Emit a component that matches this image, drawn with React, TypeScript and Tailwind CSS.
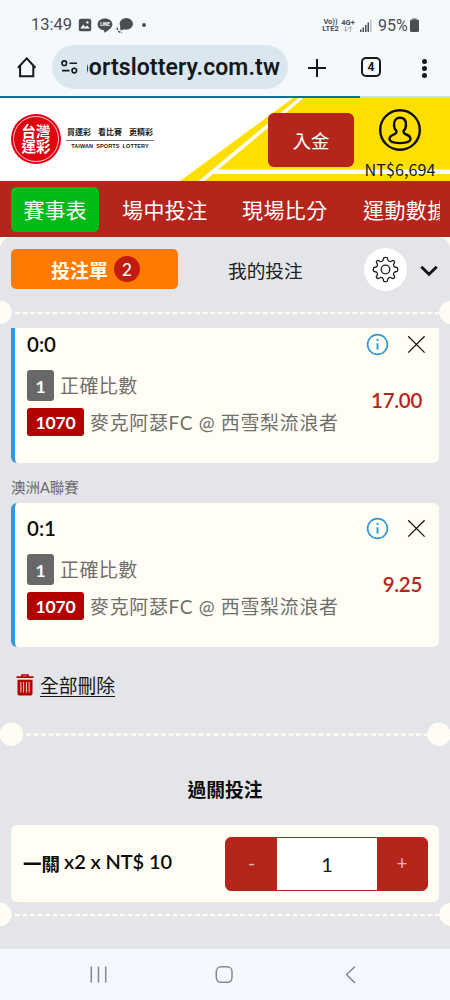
import type { ReactNode } from 'react'

type Bet = {
  score: string
  odds: string
}

const bets: Bet[] = [
  { score: '0:0', odds: '17.00' },
  { score: '0:1', odds: '9.25' },
]

function StatusBar() {
  return (
    <div className="h-[45px] pt-[5px] pl-[31px] pr-[31px] flex items-center justify-between text-[#4a4d52] font-['Roboto',sans-serif]">
      <div className="flex items-center">
        <span className="w-[47px] text-[16.5px] leading-5 whitespace-nowrap">13:49</span>
        <svg width="14" height="14" viewBox="0 0 14 14" className="block">
          <rect x="0.8" y="0.8" width="12.4" height="12.4" rx="2" fill="#4a4d52" />
          <path d="M2.3 10.6 L5.2 6.6 L7.4 9 L9.2 7.4 L11.8 10.6 Z" fill="#f5f8fd" />
          <circle cx="9.4" cy="4.4" r="1.2" fill="#f5f8fd" />
        </svg>
        <svg width="16" height="15" viewBox="0 0 16 15" className="block ml-[5px]">
          <path d="M8 0.4C3.9 0.4 0.6 3 0.6 6.4c0 3 2.6 5.3 6.1 5.8.8.2.6.9.5 2 0 .4.3.4.6.2 2.4-1.4 7.6-4.6 7.6-8C15.4 3 12.1.4 8 .4Z" fill="#4a4d52" />
          <text x="8" y="8.3" textAnchor="middle" fontSize="4.6" fontWeight="900" fill="#f5f8fd">LINE</text>
        </svg>
        <svg width="18" height="17" viewBox="0 0 18 17" className="block ml-[3px]">
          <ellipse cx="10.3" cy="6.8" rx="6.7" ry="5.9" fill="#4a4d52" />
          <path d="M4 9 L4.500 13.500 L9 12 Z" fill="#4a4d52" />
          <path d="M1.2 10.5c0 3 2 5 5 5" fill="none" stroke="#4a4d52" strokeWidth="1.5" strokeDasharray="2.4 1.2" />
        </svg>
        <span className="ml-[8px] size-[4px] rounded-full bg-[#4a4d52]" />
      </div>
      <div className="flex items-center">
        <div className="w-[19px] text-[7.5px] leading-[7px] font-bold text-center whitespace-nowrap">
          <p>Vo))</p>
          <p>LTE2</p>
        </div>
        <div className="w-[14px] ml-[1px] flex flex-col items-center text-[7.5px] leading-[7px] font-bold">
          <p>4G+</p>
          <svg width="10" height="6" viewBox="0 0 10 6" fill="none" stroke="#9b9ea3" strokeWidth="0.9">
            <path d="M2.8 0v5.2M1 3.5l1.8 1.8 1.8-1.8M7.2 6V.7M5.4 2.5 7.2.7 9 2.500" />
          </svg>
        </div>
        <svg width="12" height="12" viewBox="0 0 12 12" className="block ml-[5px] mt-[2px]" fill="#4a4d52">
          <rect x="0" y="9.5" width="1.5" height="2.5" />
          <rect x="2.5" y="7.5" width="1.5" height="4.5" />
          <rect x="5" y="5" width="1.5" height="7" />
          <rect x="7.5" y="2.5" width="1.5" height="9.5" />
          <rect x="10" y="0" width="1.5" height="12" fill="#b9bcc1" />
        </svg>
        <span className="ml-[6px] w-[31px] pt-[1px] text-[16px] leading-5 whitespace-nowrap">95%</span>
        <svg width="9" height="14" viewBox="0 0 9 14" className="block ml-[1px]">
          <rect x="2.5" y="0" width="4" height="3" fill="#9b9ea3" />
          <rect x="0" y="1.5" width="9" height="12.5" rx="1.5" fill="#4a4d52" />
        </svg>
      </div>
    </div>
  )
}

function BrowserBar() {
  return (
    <div className="h-[51px] flex items-start text-[#15191d]">
      <svg width="20" height="21" viewBox="0 0 20 21" className="block ml-[17px] mt-[12px]" fill="none" stroke="#15191d" strokeWidth="2">
        <path d="M1 10.800 9.700 1.400l8.700 9.400M3.100 8.800v10.400h13.200V8.800" />
      </svg>
      <div className="ml-[15px] w-[236px] h-[44px] rounded-full bg-[#dae7ef] flex items-center pl-[9px] overflow-hidden">
        <svg width="17" height="14" viewBox="0 0 17 14" className="block" fill="none" stroke="#15191d" strokeWidth="1.6">
          <circle cx="3.3" cy="3.2" r="2.300" />
          <path d="M8.500 3.200H16M1 10.600h7.500" />
          <circle cx="13.300" cy="10.600" r="2.300" />
        </svg>
        <div className="ml-[9px] mt-[2px] w-[193px] overflow-hidden flex justify-end">
          <span className="text-[23px] leading-7 font-semibold font-['Roboto',sans-serif] tracking-[0.100px] whitespace-nowrap">
            portslottery.com.tw
          </span>
        </div>
      </div>
      <svg width="18" height="18" viewBox="0 0 18 18" className="block ml-[20px] mt-[14px]" stroke="#15191d" strokeWidth="2">
        <path d="M9 0v18M0 9h18" />
      </svg>
      <div className="ml-[35px] mt-[12px] size-[20px] rounded-[5px] border-2 border-[#15191d] flex items-center justify-center text-[12px] leading-none font-bold font-['Roboto',sans-serif]">
        4
      </div>
      <div className="ml-[41px] mt-[14px] flex flex-col gap-[2.5px]">
        <span className="size-[4.5px] rounded-full bg-[#15191d]" />
        <span className="size-[4.5px] rounded-full bg-[#15191d]" />
        <span className="size-[4.5px] rounded-full bg-[#15191d]" />
      </div>
    </div>
  )
}

function Logo() {
  return (
    <div className="flex items-start">
      <div className="size-[50px] rounded-full bg-[#e0000f] p-[2px]">
        <div className="size-full rounded-full border border-white/80 flex flex-col items-center justify-center pt-[1px] text-white text-[14.5px] leading-[14.5px] font-bold">
          <span>台灣</span>
          <span>運彩</span>
        </div>
      </div>
      <div className="ml-[5px] mt-[13px] w-[88px] text-[#222] text-center">
        <div className="flex justify-between text-[8px] leading-[11px] font-bold px-[1px]">
          <span>買運彩</span>
          <span>看比賽</span>
          <span>更精彩</span>
        </div>
        <div className="mt-[2px] border-t border-[#777] pt-[2px] text-[5.5px] leading-[7px] font-bold tracking-[0.1px] whitespace-nowrap font-['Liberation_Sans',sans-serif] [word-spacing:1.5px]">
          TAIWAN SPORTS LOTTERY
        </div>
      </div>
    </div>
  )
}

function SiteHeader() {
  return (
    <div className="relative h-[83px] bg-white overflow-hidden">
      {/* Franjas amarillas del fondo */}
      <svg width="450" height="83" viewBox="0 0 450 83" className="absolute inset-0">
        <path d="M293 0H450V83H180Z" fill="#ffdf00" />
        <path d="M298.500 0h5L204.500 83h-6Z" fill="#fff" />
        <path d="M207 76 214 71.500H450V76Z" fill="#fff" />
      </svg>
      <div className="relative flex items-start pl-[11px]">
        <div className="mt-[16px]">
          <Logo />
        </div>
        <button className="ml-[114px] mt-[15px] w-[86px] h-[54px] pt-[3px] shrink-0 rounded-[6px] bg-[#b6251c] text-white text-[18.5px] leading-none">
          入金
        </button>
        <div className="ml-[2px] mt-[10px] w-[88px] shrink-0 flex flex-col items-center">
          <svg width="44" height="44" viewBox="0 0 44 44" className="block" fill="none" stroke="#0c0c0c" strokeWidth="2.4">
            <circle cx="22" cy="22" r="19.8" />
            <path d="M22 9.8c-4 0-6 2.9-6 6.7 0 2.8 1 5.2 2.5 6.5.3 2-.6 2.7-2.7 3.500-3 1.100-4.300 2.600-4.300 4.600 0 2.400 4.500 4 10.500 4s10.500-1.600 10.500-4c0-2-1.300-3.500-4.300-4.600-2.100-.8-3-1.500-2.700-3.500 1.500-1.300 2.500-3.700 2.500-6.500 0-3.800-2-6.700-6-6.700Z" />
          </svg>
          <span className="mt-[7px] text-[16.2px] leading-[20px] text-[#1a1a1a] whitespace-nowrap font-['Noto_Sans_CJK_TC',sans-serif]">NT$6,694</span>
        </div>
      </div>
    </div>
  )
}

function Divider({ inset = false }: { inset?: boolean }) {
  return (
    <svg width="450" height="24" viewBox="0 0 450 24" className="block shrink-0">
      <path d={inset ? 'M26 12.7H428' : 'M15 13.200H440'} stroke="#fffdf3" strokeWidth="2.2" strokeDasharray="5 2.5" />
      <circle cx={inset ? 11.5 : 0} cy="12.3" r="11.700" fill="#fffdf3" />
      <circle cx={inset ? 439 : 451} cy="12.3" r="11.700" fill="#fffdf3" />
    </svg>
  )
}

function Tag({ children, className }: { children: ReactNode; className: string }) {
  return (
    <span className={`rounded-[3px] pt-[2px] text-white font-bold text-[17.500px] tracking-[-0.200px] leading-none flex items-center justify-center shrink-0 ${className}`}>
      {children}
    </span>
  )
}

function BetCard({ bet }: { bet: Bet }) {
  return (
    <div className="h-[144px] w-[428px] shrink-0 flex justify-between rounded-[6px] border-l-4 border-[#3498db] bg-[#fffdf4] pl-[12px]">
      <div className="pt-[13px] whitespace-nowrap">
        <p className="text-[20.5px] leading-[24px] font-semibold text-[#0c0c0c]">{bet.score}</p>
        <div className="mt-[14px] flex items-center text-[#6f6f6c]">
          <Tag className="w-[27px] h-[31px] bg-[#686868]">1</Tag>
          <span className="ml-[6px] text-[19px] leading-[31px] tracking-[0.4px]">正確比數</span>
        </div>
        <div className="mt-[6px] flex items-center text-[#6f6f6c]">
          <Tag className="w-[57px] h-[28px] bg-[#b50000]">1070</Tag>
          <span className="ml-[6px] pt-[2px] text-[19px] leading-[28px] tracking-[0.650px]">麥克阿瑟FC @ 西雪梨流浪者</span>
        </div>
      </div>
      <div className="pt-[14px] pr-[13px] flex flex-col items-end">
        <div className="flex items-center gap-[18px]">
          <svg width="23" height="23" viewBox="0 0 23 23" className="block" fill="none" stroke="#3498db">
            <circle cx="11.5" cy="11.5" r="9.9" strokeWidth="1.7" />
            <path d="M11.5 10.3v6.500M11.500 6v2" strokeWidth="1.900" />
          </svg>
          <svg width="19" height="19" viewBox="0 0 19 19" className="block" stroke="#161616" strokeWidth="1.3">
            <path d="M1.2 1.2 17.6 17.6M17.6 1.2 1.2 17.6" />
          </svg>
        </div>
        <span className="mt-[31px] mr-[4px] text-[20.500px] tracking-[-0.300px] leading-[26px] font-semibold text-[#b6251c]">{bet.odds}</span>
      </div>
    </div>
  )
}

function BetTabs() {
  return (
    <div className="h-[63px] flex items-start pl-[11px] pt-[12px]">
      <div className="w-[167px] h-[40px] pl-[2px] rounded-[5px] bg-[#ff7a00] flex items-center justify-center gap-[6px] text-[#fffdf4]">
        <span className="pt-[2px] text-[19px] leading-none font-semibold">投注單</span>
        <span className="size-[26px] rounded-full bg-[#c21b12] text-[17px] leading-none font-medium flex items-center justify-center">2</span>
      </div>
      <span className="ml-[50px] w-[76px] text-[18.7px] leading-[44px] text-[#202020] whitespace-nowrap">我的投注</span>
      <div className="ml-[60px] -mt-px size-[43px] rounded-full bg-white flex items-center justify-center">
        <svg width="27" height="27" viewBox="0 0 27 27" className="block" fill="none" stroke="#1f1f1f" strokeWidth="1.3" strokeLinejoin="round">
          <path d="M11.700 1.800Q13.500 .8 15.300 1.800L16 4.400Q17 5.700 18.600 5.500L21 4.400Q22.500 4.600 22.700 6.100L21.500 8.500Q21.400 10.200 22.700 11L25.300 11.700Q26.200 13.500 25.300 15.300L22.700 16Q21.400 16.900 21.500 18.500L22.700 20.900Q22.500 22.400 21 22.600L18.600 21.500Q17 21.300 16 22.600L15.300 25.200Q13.500 26.200 11.700 25.200L11 22.600Q10 21.300 8.400 21.500L6 22.600Q4.500 22.400 4.300 20.900L5.500 18.500Q5.600 16.900 4.300 16L1.700 15.300Q.8 13.500 1.700 11.700L4.300 11Q5.600 10.200 5.500 8.500L4.300 6.100Q4.500 4.600 6 4.400L8.400 5.500Q10 5.700 11 4.400Z" />
          <circle cx="13.5" cy="13.500" r="4.300" />
        </svg>
      </div>
      <svg width="18" height="12" viewBox="0 0 18 12" className="block ml-[13px] mt-[16px]" fill="none" stroke="#111" strokeWidth="2.900">
        <path d="M1.3 1.8 9 9.3l7.7-7.5" />
      </svg>
    </div>
  )
}

export default function App() {
  return (
    <div className="w-[450px] h-[1000px] overflow-hidden flex flex-col bg-[#f5f8fd] font-['Lato','Noto_Sans_CJK_TC',sans-serif]">
      <StatusBar />
      <BrowserBar />
      <div className="h-[2px] shrink-0 flex bg-[#c9dbe6]">
        <div className="w-[360px] bg-[#146f92]" />
      </div>

      <SiteHeader />

      {/* Menú principal */}
      <nav className="h-[56px] shrink-0 bg-[#b6251c] flex items-center pl-[11px] text-white text-[21px] leading-[28px] whitespace-nowrap">
        <span className="w-[88px] h-[45px] pt-[2px] shrink-0 rounded-[5px] bg-[#00bb15] flex items-center justify-center">賽事表</span>
        <span className="ml-[23px] w-[86px] pt-[2px] shrink-0 tracking-[0.4px]">場中投注</span>
        <span className="ml-[34px] w-[87px] pt-[2px] shrink-0 tracking-[0.4px]">現場比分</span>
        <span className="ml-[34px] w-[77px] pt-[2px] shrink-0 overflow-hidden tracking-[0.4px]">運動數據</span>
      </nav>

      <main className="h-[712px] shrink-0 bg-[#fffdf4]">
        <div className="h-full rounded-t-[12px] bg-[#e4e5e8] flex flex-col">
          <BetTabs />
          <Divider />

          {/* Lista de apuestas, la primera queda cortada por el scroll */}
          <div className="mt-[4px] ml-[11px] w-[428px]">
            <div className="h-[135px] flex items-end overflow-hidden">
              <BetCard bet={bets[0]} />
            </div>
            <p className="h-[40px] pt-[5px] text-[14.5px] leading-[40px] text-[#6a6a6c]">澳洲A聯賽</p>
            <BetCard bet={bets[1]} />
          </div>

          <div className="h-[75px] flex items-center pl-[16px] pt-[3px]">
            <svg width="18" height="22" viewBox="0 0 18 22" className="block -mt-[2px]">
              <path d="M0.5 3.2h17M6 3V1h6v2" fill="none" stroke="#b50000" strokeWidth="1.7" />
              <path d="M1.5 5.8h15v14a1.8 1.8 0 0 1-1.8 1.8H3.3a1.8 1.8 0 0 1-1.8-1.8Z" fill="#b50000" />
              <path d="M4.9 8v10.5M7.6 8v10.5M10.4 8v10.5M13.1 8v10.5" stroke="#f3dada" strokeWidth="1" />
            </svg>
            <span className="ml-[6px] text-[18.8px] leading-[21px] text-[#161616] border-b border-[#161616]">全部刪除</span>
          </div>
          <Divider inset />

          <h2 className="mt-[30px] text-center text-[18.8px] leading-[28px] font-semibold text-[#0c0c0c]">過關投注</h2>

          <div className="mt-[21px] ml-[11px] w-[428px] h-[77px] rounded-[6px] bg-[#fffdf4] flex items-center justify-between pl-[12px] pr-[11px]">
            <p className="flex items-center text-[20px] leading-[24px] font-semibold text-[#0c0c0c] whitespace-nowrap">
              <span className="text-[18.5px]">一關</span>
              <span className="ml-[4px] -mt-[5px] tracking-[-0.1px]">x2 x NT$ 10</span>
            </p>
            <div className="w-[203px] h-[54px] rounded-[6px] border border-[#b6251c] bg-[#b6251c] flex items-stretch overflow-hidden text-[#e9b5b0] text-[19px]">
              <button className="w-[51px]">-</button>
              <div className="w-[100px] bg-white text-[#161616] text-[20px] flex items-center justify-center">1</div>
              <button className="flex-1">+</button>
            </div>
          </div>
          <Divider />
        </div>
      </main>

      {/* Barra de navegación de Android */}
      <div className="h-[51px] shrink-0 bg-[#f5f8fe]">
        <svg width="450" height="51" viewBox="0 0 450 51" className="block" fill="none" stroke="#85888e" strokeWidth="1.5">
          <path d="M91.3 17.5v16M98.5 17.5v16M105.7 17.5v16" />
          <rect x="216.300" y="17.800" width="15.700" height="15.500" rx="4.800" />
          <path d="M355 17.5 346.5 25.5l8.500 8.500" />
        </svg>
      </div>
    </div>
  )
}
